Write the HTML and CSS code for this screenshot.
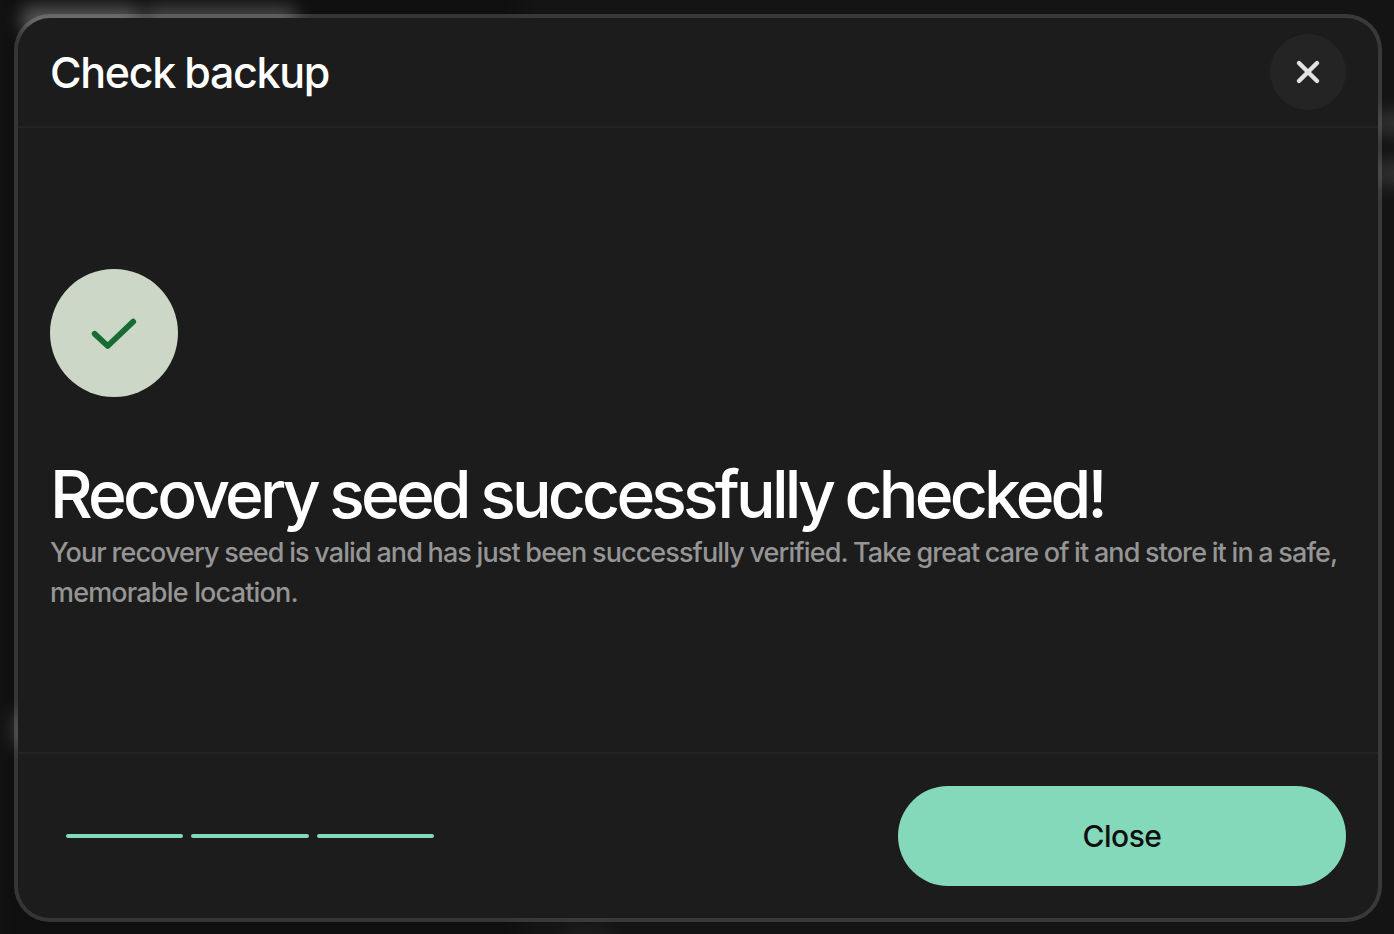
FILE: index.html
```html
<!DOCTYPE html>
<html lang="en">
<head>
<meta charset="utf-8">
<title>Check backup</title>
<link rel="stylesheet" href="styles.css">
</head>
<body>
<div class="backdrop" aria-hidden="true">
  <span class="glow glow-heading"></span>
  <span class="glow glow-heading-end"></span>
  <span class="glow glow-right-a"></span>
  <span class="glow glow-right-b"></span>
  <span class="glow glow-left"></span>
  <span class="glow glow-bottom"></span>
</div>
<main class="modal" role="dialog" aria-labelledby="modal-title">
  <header class="modal-header">
    <h2 class="modal-title" id="modal-title">Check backup</h2>
    <button class="icon-button" aria-label="Dismiss">
      <svg width="28" height="28" viewBox="0 0 28 28"><path d="M5 5 23 23M23 5 5 23"/></svg>
    </button>
  </header>
  <section class="modal-body">
    <div class="status-icon">
      <svg width="48" height="36" viewBox="0 0 48 36"><path d="M4.7 18.8 17.7 31 43.2 6.7"/></svg>
    </div>
    <h1 class="heading">Recovery seed successfully checked!</h1>
    <p class="description"><span class="line line-first">Your recovery seed is valid and has just been successfully verified. Take great care of it and store it in a safe,</span> <span class="line line-last">memorable location.</span></p>
  </section>
  <footer class="modal-footer">
    <div class="steps"><span class="step"></span><span class="step"></span><span class="step"></span></div>
    <button class="primary-button">Close</button>
  </footer>
</main>
</body>
</html>
```
FILE: styles.css
```css
* { box-sizing: border-box; }
body {
  margin: 0;
  width: 1394px;
  height: 934px;
  padding: 14px 12px 12px 14px;
  overflow: hidden;
  background: #141414;
  font-family: Inter, "Liberation Sans", sans-serif;
}
.backdrop {
  position: absolute;
  inset: 0;
  overflow: hidden;
  z-index: -1;
  background: linear-gradient(90deg, #121212 0, #0f0f0f 14px, #0f0f0f 505px, #141414 540px);
}
.glow { position: absolute; background: #fff; filter: blur(9px); border-radius: 6px; }
.glow-heading { left: 22px; top: 7px; width: 118px; height: 26px; opacity: .31; }
.glow-heading-end { left: 146px; top: 7px; width: 150px; height: 24px; opacity: .25; }
.glow-right-a { left: 1374px; top: 112px; width: 60px; height: 22px; opacity: .13; }
.glow-right-b { left: 1374px; top: 161px; width: 60px; height: 25px; opacity: .12; }
.glow-left { left: 14px; top: 712px; width: 24px; height: 34px; opacity: .2; }
.glow-bottom { left: 562px; top: 930px; width: 50px; height: 14px; opacity: .06; }
.modal {
  display: flex;
  flex-direction: column;
  width: 1368px;
  height: 908px;
  border: 4px solid rgba(255, 255, 255, .16);
  border-radius: 36px;
  background: #1c1c1c;
  background-clip: padding-box;
}
.modal-header {
  display: flex;
  align-items: center;
  justify-content: space-between;
  height: 110px;
  padding: 0 32px;
  border-bottom: 2px solid #242424;
}
.modal-title {
  margin: 0;
  color: #fff;
  font-size: 43px;
  font-weight: 500;
  line-height: 56px;
  letter-spacing: -1.3px;
  word-spacing: -1px;
  white-space: nowrap;
}
.icon-button {
  display: grid;
  place-items: center;
  width: 76px;
  height: 76px;
  padding: 0;
  border: 0;
  border-radius: 50%;
  background: #242424;
}
.icon-button svg { fill: none; stroke: #e3e3e3; stroke-width: 4.4; stroke-linecap: round; }
.modal-body {
  flex: 1;
  display: flex;
  flex-direction: column;
  justify-content: center;
  padding: 2px 32px 0;
}
.status-icon {
  display: grid;
  place-items: center;
  width: 128px;
  height: 128px;
  border-radius: 50%;
  background: #cdd7c7;
}
.status-icon svg { fill: none; stroke: #176c31; stroke-width: 5.8; stroke-linecap: round; stroke-linejoin: round; }
.heading {
  margin: 62px 0 3px;
  color: #fff;
  font-size: 66px;
  font-weight: 500;
  line-height: 71px;
  letter-spacing: -3.8px;
  word-spacing: -1.5px;
  white-space: nowrap;
}
.description {
  margin: 0;
  color: #959595;
  font-size: 27px;
  font-weight: 500;
  line-height: 40px;
}
.line { display: block; white-space: nowrap; }
.line-first { letter-spacing: -.9px; word-spacing: -.7px; }
.line-last { letter-spacing: -.82px; }
.modal-footer {
  display: flex;
  align-items: center;
  justify-content: space-between;
  height: 166px;
  padding: 0 32px 0 48px;
  border-top: 2px solid #242424;
}
.steps { display: grid; grid-template-columns: repeat(3, 1fr); gap: 8px; width: 368px; }
.step { height: 4px; border-radius: 2px; background: #85d9bb; }
.primary-button {
  width: 448px;
  height: 100px;
  padding: 0;
  border: 0;
  border-radius: 50px;
  background: #85d9bb;
  color: #0f0f0f;
  font: 500 30px/44px Inter, "Liberation Sans", sans-serif;
  letter-spacing: -.5px;
}
```
